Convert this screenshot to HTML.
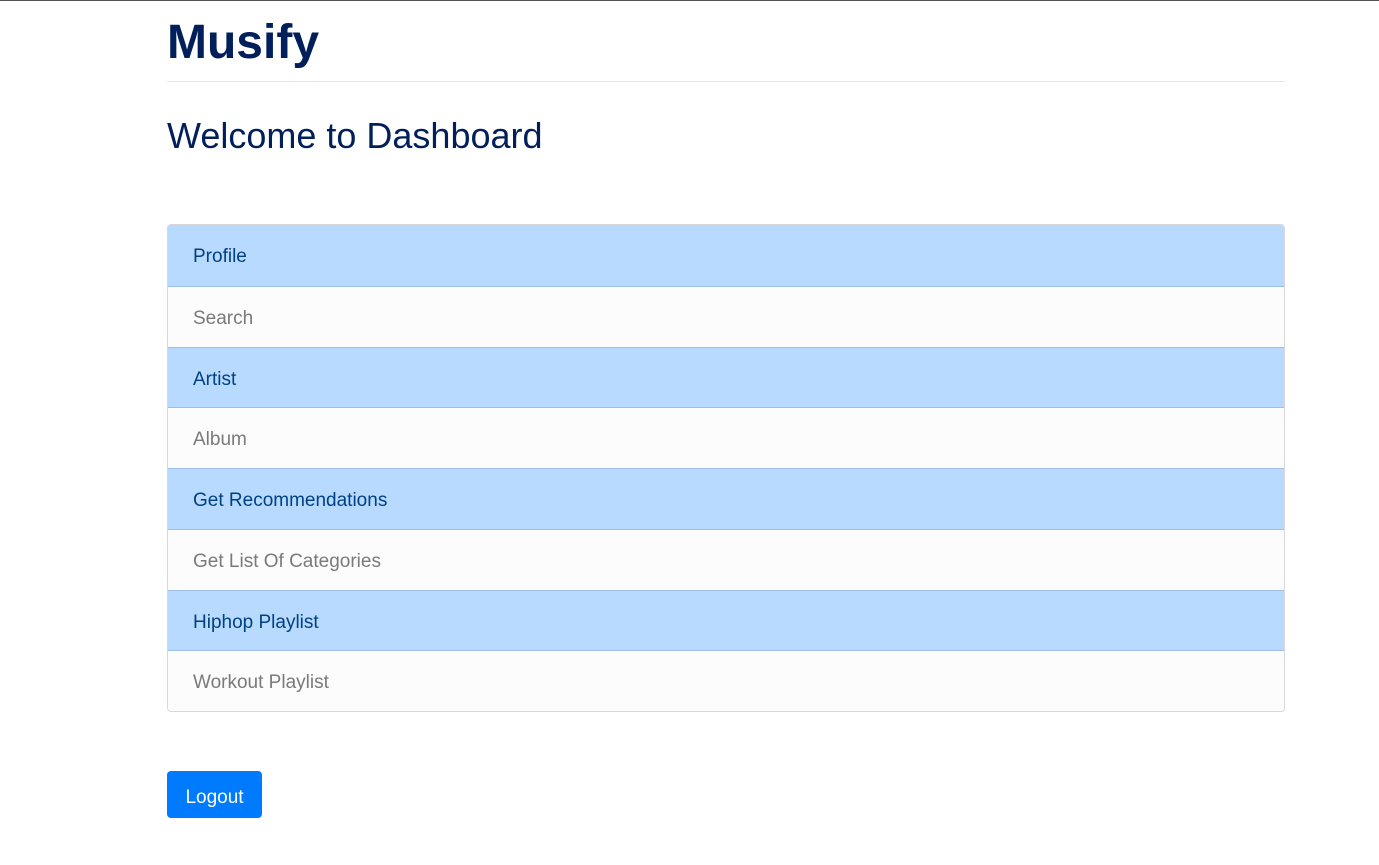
<!DOCTYPE html>
<html><head><style>
body{margin:0;background:#fff;font-family:"Liberation Sans",sans-serif;width:1379px;height:865px;overflow:hidden;border-top:1px solid #555;box-sizing:border-box;position:relative}
.t{position:absolute;left:167px;top:7px;font-size:48px;font-weight:bold;color:#001f5b;margin:0;line-height:70px}
.hr{position:absolute;left:167px;top:80px;width:1118px;height:1px;background:#e5e5e5}
.w{position:absolute;left:167px;top:112px;font-size:36px;color:#001f5b;line-height:46px}
.list{position:absolute;left:167px;top:223px;width:1116px;border:1px solid #d8d8d8;border-radius:4px;overflow:hidden}
.r{height:59.75px;line-height:64px;padding-left:25px;font-size:19px;border-top:1px solid #c8d6ea;box-sizing:content-box}
.r:first-child{border-top:none;height:60.75px}
.b{background:#b8daff;color:#004085;border-top-color:#9fbfe6}
.g{background:#fcfcfc;color:#7a7a7a;border-top-color:#9fbfe6}
.btn{position:absolute;left:167px;top:770px;width:95px;height:47px;background:#007bff;border-radius:4px;color:#fff;font-size:19px;line-height:53px;text-align:center}
</style></head><body>
<div class="t">Musify</div>
<div class="hr"></div>
<div class="w">Welcome to Dashboard</div>
<div class="list">
<div class="r b">Profile</div>
<div class="r g">Search</div>
<div class="r b">Artist</div>
<div class="r g">Album</div>
<div class="r b">Get Recommendations</div>
<div class="r g">Get List Of Categories</div>
<div class="r b">Hiphop Playlist</div>
<div class="r g">Workout Playlist</div>
</div>
<div class="btn">Logout</div>
</body></html>
